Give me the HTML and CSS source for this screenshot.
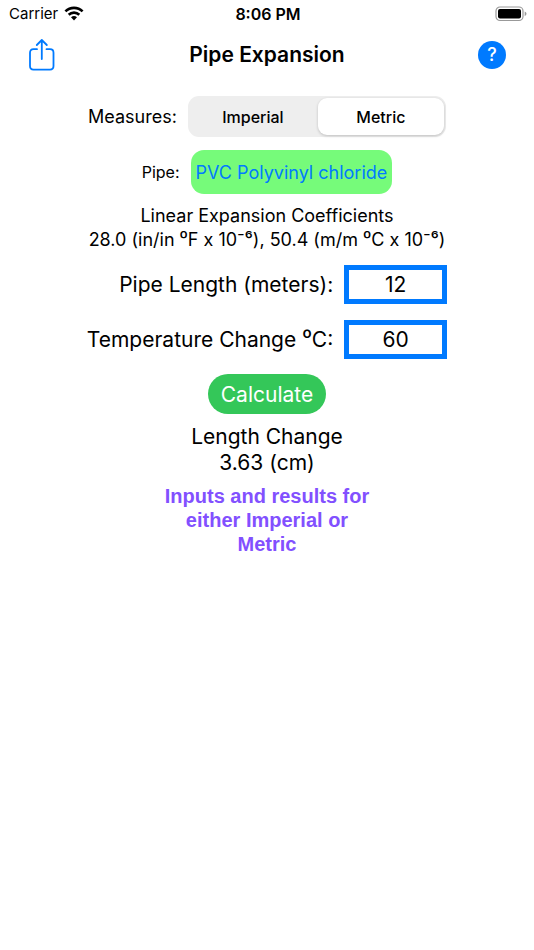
FILE: index.html
```html
<!DOCTYPE html>
<html lang="en">
<head>
  <meta charset="UTF-8" />
  <meta name="viewport" content="width=device-width, initial-scale=1.0" />
  <title>Pipe Expansion</title>
  <link rel="stylesheet" href="styles.css">
</head>
<body>
  <div class="status-bar">
    <div class="carrier">
      <span>Carrier</span>
      <svg class="wifi" width="20" height="16" viewBox="0 0 20 16" aria-hidden="true">
        <g fill="none" stroke="#000" stroke-width="2.6">
          <path d="M1.4 5.4a12.3 12.3 0 0 1 17.2 0" />
          <path d="M4.7 8.8a7.6 7.6 0 0 1 10.6 0" />
        </g>
        <path d="M10 14.4l-3-3.1a4.4 4.4 0 0 1 6 0z" />
      </svg>
    </div>
    <div class="time">8:06 PM</div>
    <svg class="battery" width="32" height="16" viewBox="0 0 32 16" aria-hidden="true">
      <rect x="1" y="1" width="27" height="13.5" rx="4" fill="none" stroke="#999" stroke-width="1.2" />
      <rect x="3" y="3" width="23" height="9.5" rx="2" />
      <path d="M29.7 5.4q1.8 1 1.8 2.4t-1.8 2.4z" fill="#999" />
    </svg>
  </div>

  <header class="nav-bar">
    <button class="icon-button" type="button" aria-label="Share">
      <svg width="28" height="34" viewBox="0 0 28 34" fill="none" stroke="#007aff" stroke-width="1.8" stroke-linecap="round" stroke-linejoin="round">
        <path d="M9 11.2H5.5q-3.5 0-3.5 3.5v13.4q0 3.5 3.5 3.5h16.5q3.5 0 3.5-3.5V14.7q0-3.5-3.5-3.5h-3.5" />
        <path d="M13.8 21V2.2M8.8 7l5-5 5 5" />
      </svg>
    </button>
    <h1>Pipe Expansion</h1>
    <button class="icon-button help" type="button" aria-label="Help">?</button>
  </header>

  <main>
    <div class="row">
      <span class="label" id="measures-label">Measures:</span>
      <div class="segments" role="radiogroup" aria-labelledby="measures-label">
        <label class="segment"><input type="radio" name="measures" value="imperial"><span>Imperial</span></label>
        <label class="segment"><input type="radio" name="measures" value="metric" checked><span>Metric</span></label>
      </div>
    </div>

    <div class="row pipe-row">
      <label class="small-label" for="pipe">Pipe:</label>
      <button class="pipe-button" id="pipe" type="button">PVC Polyvinyl chloride</button>
    </div>

    <p class="coefficients">Linear Expansion Coefficients<br>28.0 (in/in ⁰F x 10⁻⁶), 50.4 (m/m ⁰C x 10⁻⁶)</p>

    <form class="inputs">
      <label for="length">Pipe Length (meters):</label>
      <input id="length" type="text" inputmode="decimal" value="12">
      <label for="temperature">Temperature Change ⁰C:</label>
      <input id="temperature" type="text" inputmode="decimal" value="60">
    </form>

    <button class="calculate" type="button">Calculate</button>

    <p class="result">Length Change<br>3.63 (cm)</p>
    <p class="note">Inputs and results for either Imperial or Metric</p>
  </main>
</body>
</html>
```
FILE: styles.css
```css
* {
  box-sizing: border-box;
}

body {
  margin: 0;
  font-family: Inter, "Liberation Sans", sans-serif;
  color: #000;
  background: #fff;
}

button,
input {
  font: inherit;
}

h1,
p {
  margin: 0;
}

.status-bar {
  display: grid;
  grid-template-columns: 1fr auto 1fr;
  align-items: center;
  height: 27px;
  padding: 0 7px 0 9px;
  font-size: 15px;
}

.carrier {
  display: flex;
  align-items: center;
  gap: 6px;
}

.time {
  font-size: 16px;
  font-weight: 600;
}

.battery {
  justify-self: end;
}

.nav-bar {
  display: flex;
  align-items: center;
  justify-content: space-between;
  height: 55px;
  padding: 0 28px;
}

.nav-bar h1 {
  font-size: 21px;
  font-weight: 600;
}

.icon-button {
  display: block;
  width: 28px;
  padding: 0;
  border: none;
  background: none;
  cursor: pointer;
}

.icon-button svg {
  display: block;
}

.help {
  height: 28px;
  border-radius: 50%;
  background: #007aff;
  color: #fff;
  font-size: 18px;
  font-weight: 500;
  line-height: 28px;
}

main {
  display: flex;
  flex-direction: column;
  align-items: center;
  padding-top: 14px;
}

.row {
  display: flex;
  align-items: center;
  gap: 11px;
}

.label {
  font-size: 18px;
}

.segments {
  display: grid;
  grid-template-columns: 1fr 1fr;
  gap: 2px;
  width: 258px;
  height: 41px;
  padding: 2px;
  border-radius: 11px;
  background: #eee;
}

.segment {
  position: relative;
  display: flex;
  font-size: 16px;
  font-weight: 500;
  cursor: pointer;
}

.segment input {
  position: absolute;
  inset: 0;
  margin: 0;
  opacity: 0;
}

.segment span {
  flex: 1;
  display: flex;
  align-items: center;
  justify-content: center;
  border-radius: 9px;
}

.segment input:checked + span {
  background: #fff;
  box-shadow: 0 1px 3px rgba(0, 0, 0, 0.2);
}

.pipe-row {
  margin-top: 13px;
}

.small-label {
  font-size: 16px;
}

.pipe-button {
  height: 44px;
  padding: 0 5px;
  border: none;
  border-radius: 13px;
  background: #76fb7a;
  color: #007aff;
  font-size: 18px;
}

.coefficients {
  margin-top: 10px;
  font-size: 18px;
  line-height: 24px;
  text-align: center;
}

.inputs {
  display: grid;
  grid-template-columns: auto 103px;
  align-items: center;
  gap: 16px 11px;
  margin-top: 13px;
  font-size: 21px;
  text-align: right;
}

.inputs input {
  width: 100%;
  height: 39px;
  padding: 0;
  border: 5px solid #007aff;
  border-radius: 0;
  background: #fff;
  color: #000;
  text-align: center;
}

.calculate {
  height: 40px;
  margin-top: 15px;
  padding: 0 13px;
  border: none;
  border-radius: 20px;
  background: #34c759;
  color: #fff;
  font-size: 21px;
}

.result {
  margin-top: 10px;
  font-size: 21px;
  line-height: 26px;
  text-align: center;
}

.note {
  max-width: 220px;
  margin-top: 8px;
  color: #8250ff;
  font-family: "Liberation Sans", Arial, sans-serif;
  font-size: 20px;
  font-weight: bold;
  line-height: 24px;
  text-align: center;
}
```
